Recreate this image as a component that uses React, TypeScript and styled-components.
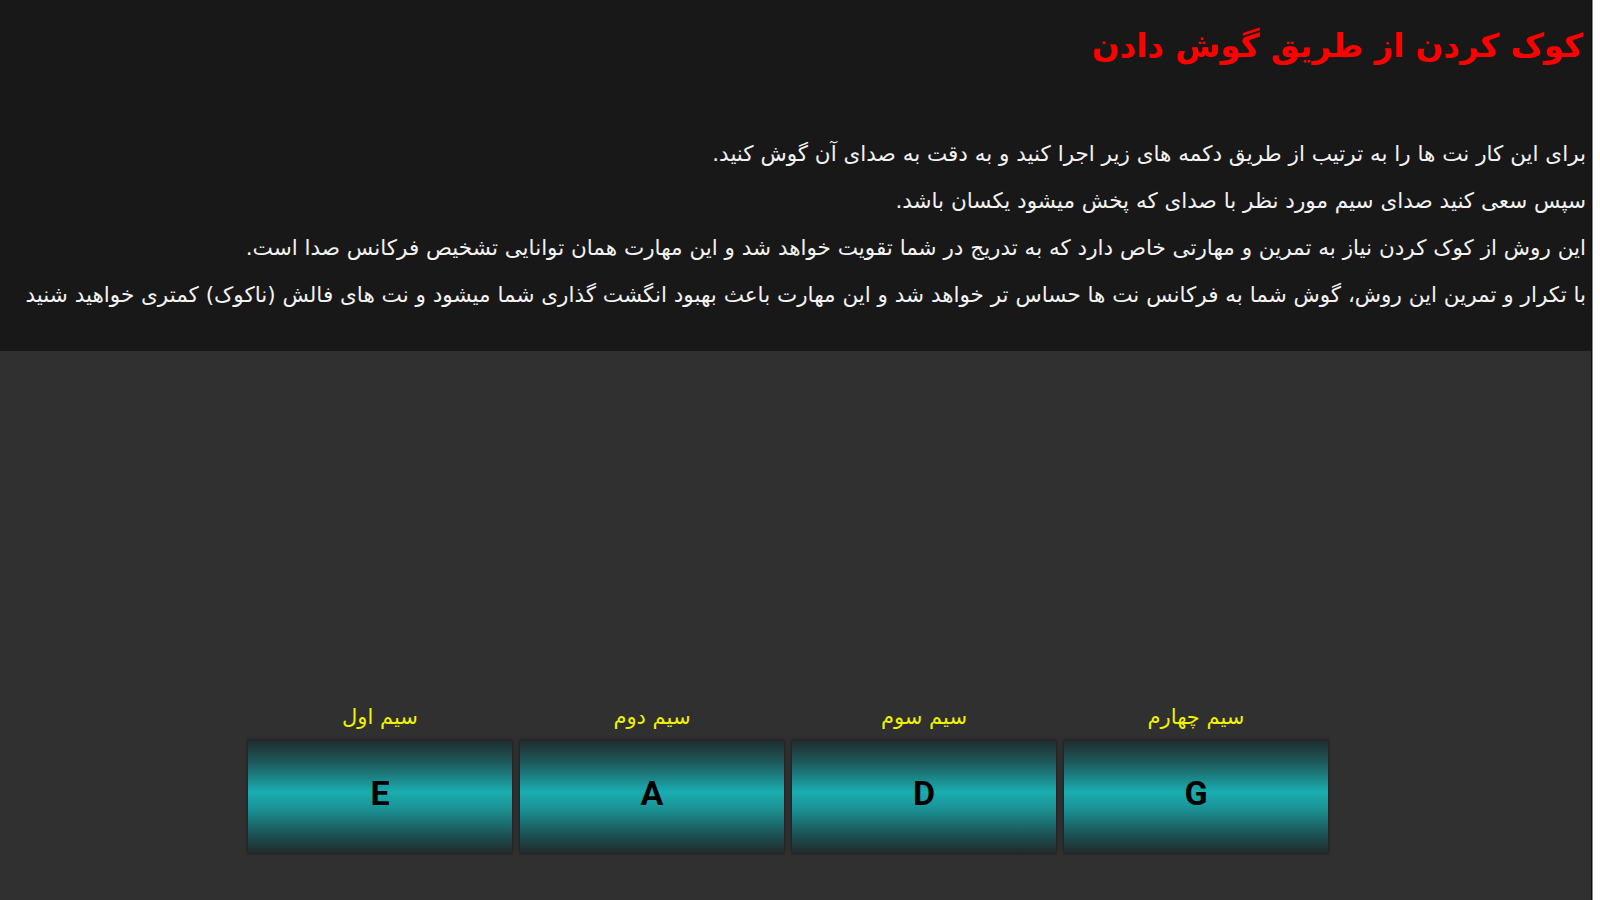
import React from "react";
import styled, { createGlobalStyle } from "styled-components";

const Global = createGlobalStyle`
  html, body { margin: 0; padding: 0; background: #ffffff; }
  body { font-family: "DejaVu Sans", "Noto Sans", sans-serif; }
  * { box-sizing: border-box; }
`;

const Page = styled.div`
  width: calc(100% - 8px);
  height: 900px;
  display: flex;
  flex-direction: column;
  background: #303030;
  border-right: 1px solid #0c0c0c;
  box-shadow: 1px 0 0 #8a8a8a;
  overflow: hidden;
`;

const Header = styled.header`
  background: #181818;
  direction: rtl;
  padding: 11px 5px 31px 5px;
  height: 351px;
`;

const Title = styled.h1`
  margin: 0 3px 49px 0;
  font-family: "DejaVu Sans", sans-serif;
  font-weight: bold;
  font-size: 32.5px;
  line-height: 70px;
  color: #ff0000;
  text-align: right;
`;

const Lines = styled.div`
  display: flex;
  flex-direction: column;
`;

const Line = styled.p`
  margin: 0;
  font-family: "DejaVu Sans", sans-serif;
  font-size: 21.5px;
  line-height: 47px;
  color: #f2f2f2;
  text-align: right;
  white-space: nowrap;
`;

const Main = styled.main`
  flex: 1;
  display: flex;
  justify-content: center;
  padding: 350px 15px 0 0;
`;

const Strings = styled.div`
  display: flex;
  flex-direction: row;
  gap: 8px;
`;

const StringCol = styled.div`
  display: flex;
  flex-direction: column;
  align-items: center;
  width: 264px;
`;

const Label = styled.div`
  direction: rtl;
  font-family: "DejaVu Sans", sans-serif;
  font-size: 21px;
  line-height: 32px;
  height: 32px;
  color: #f2f200;
  margin-bottom: 7px;
`;

const NoteButton = styled.button`
  width: 264px;
  height: 113px;
  border: none;
  padding: 0 0 7px 0;
  cursor: pointer;
  background: linear-gradient(
    to bottom,
    #1f2b2d 0%,
    #1d5a5c 20%,
    #1aadb0 46%,
    #1a9497 60%,
    #1b5254 84%,
    #232a2b 100%
  );
  box-shadow: 0 0 3px rgba(0, 0, 0, 0.6);
  font-family: Roboto, "Liberation Sans", sans-serif;
  font-weight: bold;
  font-size: 34px;
  color: #000000;
  display: flex;
  align-items: center;
  justify-content: center;
`;

const lines = [
  "برای این کار نت ها را به ترتیب از طریق دکمه های زیر اجرا کنید و به دقت به صدای آن گوش کنید.",
  "سپس سعی کنید صدای سیم مورد نظر با صدای که پخش میشود یکسان باشد.",
  "این روش از کوک کردن نیاز به تمرین و مهارتی خاص دارد که به تدریج در شما تقویت خواهد شد و این مهارت همان توانایی تشخیص فرکانس صدا است.",
  "با تکرار و تمرین این روش، گوش شما به فرکانس نت ها حساس تر خواهد شد و این مهارت باعث بهبود انگشت گذاری شما میشود و نت های فالش (ناکوک) کمتری خواهید شنید",
];

const strings = [
  { label: "سیم اول", note: "E" },
  { label: "سیم دوم", note: "A" },
  { label: "سیم سوم", note: "D" },
  { label: "سیم چهارم", note: "G" },
];

export default function App() {
  return (
    <>
      <Global />
      <Page>
        <Header>
          <Title>کوک کردن از طریق گوش دادن</Title>
          <Lines>
            {lines.map((l, i) => (
              <Line key={i}>{l}</Line>
            ))}
          </Lines>
        </Header>
        <Main>
          <Strings>
            {strings.map((s) => (
              <StringCol key={s.note}>
                <Label>{s.label}</Label>
                <NoteButton>{s.note}</NoteButton>
              </StringCol>
            ))}
          </Strings>
        </Main>
      </Page>
    </>
  );
}
